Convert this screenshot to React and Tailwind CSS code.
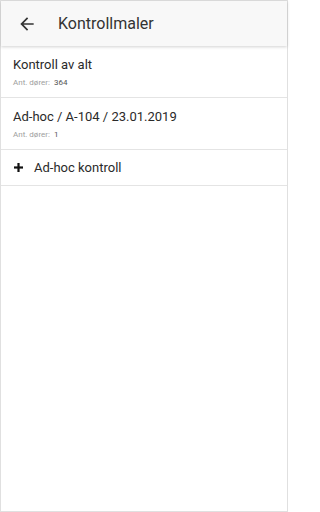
import React from "react";

const rows = [
  { title: "Kontroll av alt", count: 364 },
  { title: "Ad-hoc / A-104 / 23.01.2019", count: 1 },
];

function BackArrow() {
  return (
    <svg width="20" height="20" viewBox="0 0 24 24" fill="#333333">
      <path d="M20 11H7.83l5.59-5.59L12 4l-8 8 8 8 1.41-1.41L7.83 13H20v-2z" />
    </svg>
  );
}

function Plus() {
  return (
    <svg width="9" height="9" viewBox="0 0 9 9" fill="#111111">
      <rect x="3.4" y="0" width="2.2" height="9" />
      <rect x="0" y="3.4" width="9" height="2.2" />
    </svg>
  );
}

export default function App() {
  return (
    <div className="flex h-[512px] w-[288px] flex-col border border-[#e0e0e0] bg-white font-['Roboto',sans-serif]">
      {/* header */}
      <div className="relative z-10 flex h-[45px] shrink-0 items-center bg-[#f8f8f8] pl-4 shadow-[0_1px_3px_rgba(0,0,0,0.18)]">
        <BackArrow />
        <span className="ml-[21px] text-[16px] leading-6 text-[#333333]">Kontrollmaler</span>
      </div>

      {/* list */}
      {rows.map((row) => (
        <div key={row.title} className="border-b border-[#e4e4e4] px-3 pt-[9px] pb-[8px]">
          <div className="text-[13px] leading-5 text-[#2a2a2a]">{row.title}</div>
          <div className="mt-[2px] text-[8px] leading-3">
            <span className="text-[#9e9e9e]">Ant. dører:</span>
            <span className="ml-1 text-[#555555]">{row.count}</span>
          </div>
        </div>
      ))}

      <div className="flex h-[36px] items-center border-b border-[#e4e4e4] pl-[13px]">
        <Plus />
        <span className="ml-[11px] text-[13px] leading-5 text-[#2a2a2a]">Ad-hoc kontroll</span>
      </div>
    </div>
  );
}
